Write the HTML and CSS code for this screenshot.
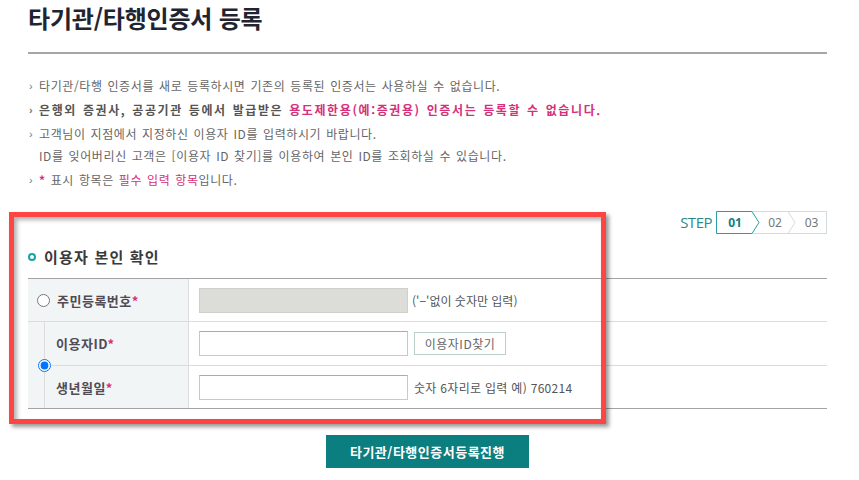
FILE: index.html
```html
<!DOCTYPE html>
<html lang="ko">
<head>
<meta charset="utf-8">
<title>타기관/타행인증서 등록</title>
<link rel="stylesheet" href="styles.css">
</head>
<body>
<div class="page">
  <h1 class="title">타기관/타행인증서 등록</h1>

  <ul class="notes">
    <li><span>타기관/타행 인증서를 새로 등록하시면 기존의 등록된 인증서는 사용하실 수 없습니다.</span></li>
    <li class="strong"><span>은행외 증권사, 공공기관 등에서 발급받은 <em class="pink">용도제한용(예:증권용) 인증서는 등록할 수 없습니다.</em></span></li>
    <li><span>고객님이 지점에서 지정하신 이용자 ID를 입력하시기 바랍니다.<br>ID를 잊어버리신 고객은 [이용자 ID 찾기]를 이용하여 본인 ID를 조회하실 수 있습니다.</span></li>
    <li><span><b class="req">*</b> 표시 항목은 <em class="pink">필수 입력 항목</em>입니다.</span></li>
  </ul>

  <div class="steps">
    <span class="steps-label">STEP</span>
    <div class="steps-box">
      <svg class="steps-bg" width="111" height="23" viewBox="0 0 111 23" aria-hidden="true">
        <rect x="0.5" y="0.5" width="110" height="22" fill="#fff" stroke="#d3dcdc"/>
        <polyline points="72,0.5 79,11.5 72,22.5" fill="none" stroke="#d3dcdc"/>
        <polygon points="0.5,0.5 36,0.5 43,11.5 36,22.5 0.5,22.5" fill="#fff" stroke="#2a9e9e"/>
      </svg>
      <span class="step s1 active">01</span><span class="step s2">02</span><span class="step s3">03</span>
    </div>
  </div>

  <h2 class="section"><span class="ring"></span>이용자 본인 확인</h2>

  <div class="form-grid">
    <div class="cell lab lab-r1"><input class="radio" type="radio" name="auth"><span>주민등록번호<b class="req">*</b></span></div>
    <div class="cell field f-r1"><span class="input disabled"></span><span class="hint">('−'없이 숫자만 입력)</span></div>
    <div class="cell lab lab-r2"><span>이용자ID<b class="req">*</b></span></div>
    <div class="cell field f-r2"><input class="input" type="text"><button class="btn-find" type="button">이용자ID찾기</button></div>
    <div class="cell lab lab-r3"><span>생년월일<b class="req">*</b></span></div>
    <div class="cell field f-r3"><input class="input" type="text"><span class="hint hint-gap">숫자 6자리로 입력 예) 760214</span></div>
    <div class="cell radio-cell"><input class="radio radio-over" type="radio" name="auth" checked></div>
  </div>

  <div class="actions"><button class="submit" type="button">타기관/타행인증서등록진행</button></div>
</div>
<div class="annot"></div>
</body>
</html>
```

FILE: styles.css
```css
* { box-sizing: border-box; }

html, body {
  margin: 0;
  padding: 0;
  background: #fff;
}

body {
  font-family: "Noto Sans CJK KR", "Noto Sans", sans-serif;
  color: #666;
  font-size: 12px;
  position: relative;
  width: 859px;
  height: 480px;
  overflow: hidden;
}

.page {
  width: 799px;
  margin-left: 28px;
}

.title {
  margin: 0;
  padding: 4px 0 20px;
  font-size: 24px;
  line-height: 28px;
  font-weight: 700;
  color: #1e2531;
  letter-spacing: -0.2px;
  border-bottom: 2px solid #a6a6a6;
}

.notes {
  list-style: none;
  margin: 21px 0 0;
  padding: 0;
}

.notes li {
  display: flex;
  line-height: 22px;
  margin-bottom: 2px;
  letter-spacing: 0.6px;
  word-spacing: 1px;
}

.notes li:last-child { margin-bottom: 0; }

.notes li::before {
  content: "›";
  flex: none;
  width: 10px;
  margin-left: 1px;
  font-family: "Liberation Sans", sans-serif;
  font-size: 11px;
  color: #777;
  letter-spacing: 0;
}

.notes li.strong {
  font-weight: 700;
  color: #555;
  letter-spacing: 1.6px;
}

.pink {
  font-style: normal;
  color: #d6307a;
}

.req {
  color: #d6307a;
  font-weight: 700;
}

.steps {
  display: flex;
  justify-content: flex-end;
  align-items: center;
  gap: 4px;
  margin-top: 20px;
  height: 23px;
}

.steps-label {
  font-family: "Open Sans", sans-serif;
  font-size: 15px;
  letter-spacing: -0.5px;
  color: #2a8b8b;
  line-height: 23px;
}

.steps-box {
  position: relative;
  display: flex;
  width: 111px;
  height: 23px;
}

.steps-bg {
  position: absolute;
  left: 0;
  top: 0;
}

.step {
  position: relative;
  text-align: center;
  line-height: 23px;
  font-family: "Noto Sans", sans-serif;
  font-size: 12px;
  color: #777;
}

.s1 { width: 38px; }
.s2 { width: 42px; }
.s3 { width: 31px; }

.step.active {
  color: #0f7f7f;
  font-weight: 700;
}

.section {
  display: flex;
  align-items: center;
  gap: 8px;
  margin: 13px 0 11px;
  font-size: 15px;
  line-height: 20px;
  letter-spacing: 1.2px;
  font-weight: 700;
  color: #3a3a3a;
}

.ring {
  width: 8px;
  height: 8px;
  border: 2.5px solid #14a2a2;
  border-radius: 50%;
  flex: none;
}

.form-grid {
  display: grid;
  grid-template-columns: 17px 144px 1fr;
  grid-template-rows: 43px 44px 42px;
  border-top: 1px solid #a3a3a3;
  border-bottom: 1px solid #a3a3a3;
}

.cell {
  display: flex;
  align-items: center;
}

.lab {
  background: #f2f5f6;
  border-right: 1px solid #dcdcdc;
  font-size: 13px;
  font-weight: 700;
  color: #514b55;
  letter-spacing: 0.5px;
}

.lab-r1 {
  grid-column: 1 / 3;
  grid-row: 1;
  border-bottom: 1px solid #dcdcdc;
  padding-left: 9px;
  gap: 7px;
}

.lab-r2 {
  grid-column: 2;
  grid-row: 2;
  border-bottom: 1px solid #dcdcdc;
  padding-left: 11px;
}

.lab-r3 {
  grid-column: 2;
  grid-row: 3;
  padding-left: 11px;
}

.radio-cell {
  grid-column: 1;
  grid-row: 2 / 4;
  background: #f2f5f6;
  border-right: 1px solid #dcdcdc;
  justify-content: flex-end;
}

.radio {
  margin: 0;
  width: 13px;
  height: 13px;
  flex: none;
}

.radio-over {
  margin-right: -6.5px;
}

.field {
  padding-left: 10px;
  gap: 4px;
}

.f-r1 { grid-column: 3; grid-row: 1; border-bottom: 1px solid #dcdcdc; }
.f-r2 { grid-column: 3; grid-row: 2; border-bottom: 1px solid #dcdcdc; gap: 6px; }
.f-r3 { grid-column: 3; grid-row: 3; gap: 6px; }

.input {
  display: block;
  width: 209px;
  height: 25px;
  margin: 0;
  padding: 0 4px;
  border: 1px solid #c9c9c9;
  border-top-color: #ababab;
  background: #fff;
  font: inherit;
  outline: none;
}

.input.disabled {
  background: #dcdcd8;
  border-color: #cfcfcb;
}

.hint {
  font-size: 12px;
  color: #555;
  white-space: nowrap;
}

.hint-gap { letter-spacing: 0.3px; }

.btn-find {
  width: 92px;
  height: 23px;
  margin: 0;
  padding: 0;
  border: 1px solid #b9cfc7;
  background: #fff;
  font-family: inherit;
  font-size: 12px;
  color: #666;
  letter-spacing: 0.5px;
}

.actions {
  display: flex;
  justify-content: center;
  margin-top: 26px;
}

.submit {
  width: 203px;
  height: 33px;
  margin: 0;
  padding: 0;
  border: 0;
  background: #0b7e7f;
  color: #fff;
  font-family: inherit;
  font-size: 13px;
  font-weight: 700;
  letter-spacing: 0.5px;
}

.annot {
  position: absolute;
  left: 9px;
  top: 212px;
  width: 597px;
  height: 212px;
  border: 5px solid #ff4444;
  box-shadow: 3px 3px 4px rgba(0, 0, 0, 0.4), inset 3px 3px 4px rgba(0, 0, 0, 0.3);
  pointer-events: none;
}
```
